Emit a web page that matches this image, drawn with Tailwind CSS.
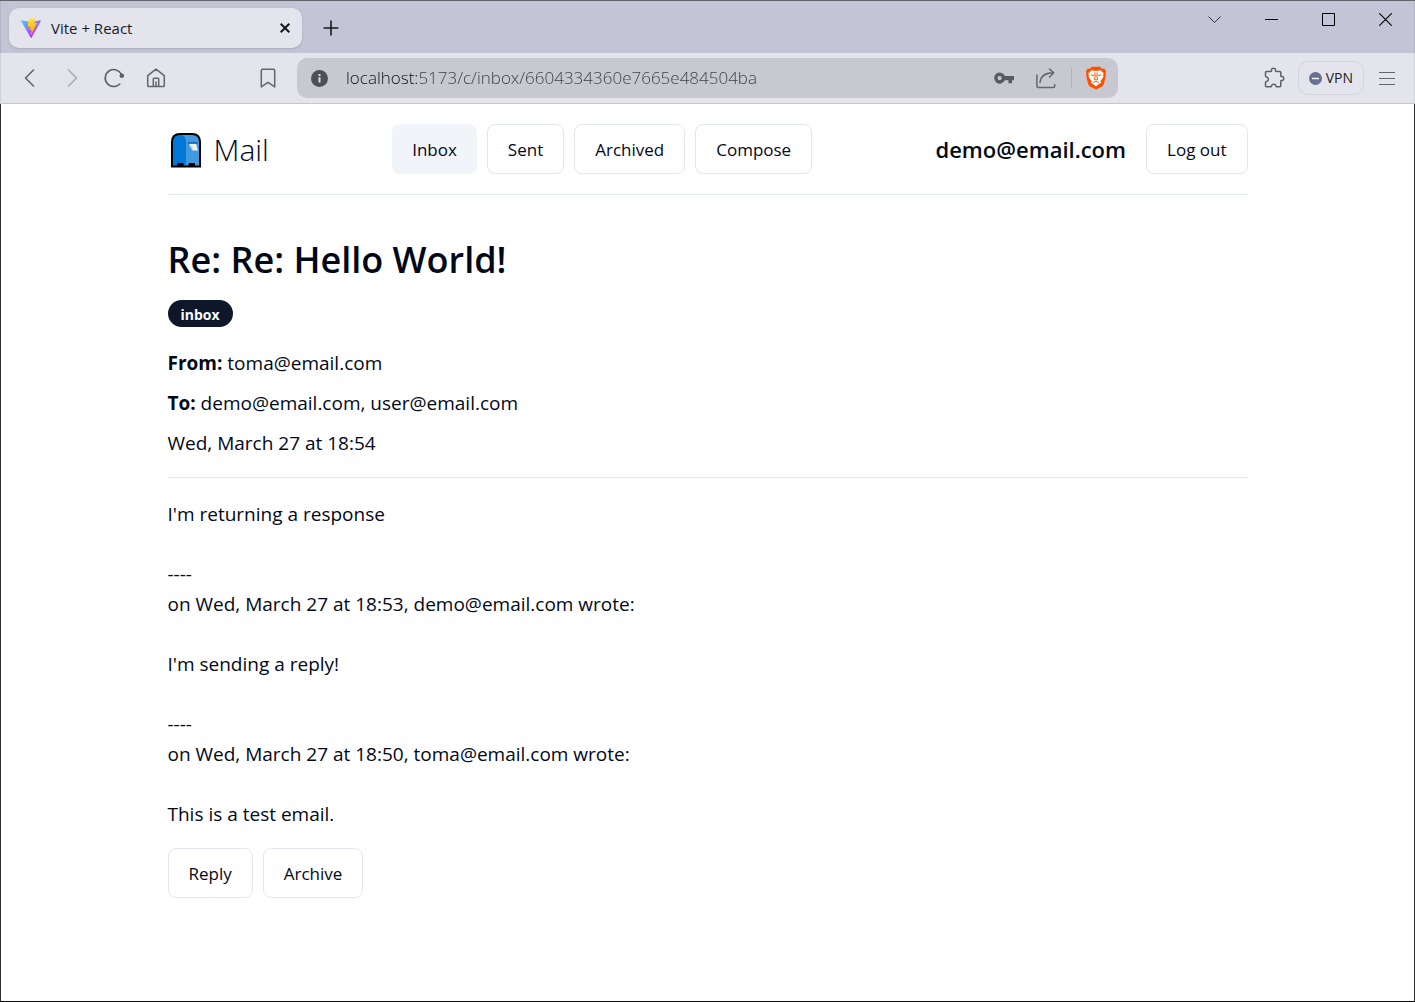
<!DOCTYPE html>
<html lang="en">
<head>
<meta charset="utf-8">
<meta name="viewport" content="width=device-width, initial-scale=1">
<title>Vite + React</title>
<script src="https://cdn.jsdelivr.net/npm/@tailwindcss/browser@4"></script>
</head>
<body class="flex min-h-screen flex-col border-t border-t-[#62626c] bg-white font-['Open_Sans','Noto_Sans',sans-serif] text-[#020817]">

<!-- Tab strip -->
<div class="flex h-[52px] items-start justify-between border-x border-[#b4b4c4] bg-[#c4c4d7]">
  <div class="flex items-center gap-[17px] pt-[7px] pl-2">
    <div class="flex h-10 w-[293px] items-center rounded-[10px] bg-[#e4e4ed] pr-3 pl-3 shadow-sm">
      <svg class="h-5 w-5" viewBox="0 0 256 257" aria-hidden="true">
        <defs>
          <linearGradient id="va" x1="0" y1="0" x2="0.6" y2="0.85"><stop offset="0" stop-color="#41D1FF"/><stop offset="1" stop-color="#BD34FE"/></linearGradient>
          <linearGradient id="vb" x1="0.43" y1="0.02" x2="0.5" y2="0.9"><stop offset="0" stop-color="#FFEA83"/><stop offset="0.08" stop-color="#FFDD35"/><stop offset="1" stop-color="#FFA800"/></linearGradient>
        </defs>
        <path fill="url(#va)" d="M255.153 37.938 134.897 252.976c-2.483 4.44-8.862 4.466-11.382.048L.875 37.958c-2.746-4.814 1.371-10.646 6.827-9.67l120.385 21.517a6.537 6.537 0 0 0 2.322-.004l117.867-21.483c5.438-.991 9.574 4.796 6.877 9.62Z"/>
        <path fill="url(#vb)" d="M185.432.063 96.44 17.501a3.268 3.268 0 0 0-2.634 3.014l-5.474 92.456a3.268 3.268 0 0 0 3.997 3.378l24.777-5.718c2.318-.535 4.413 1.507 3.936 3.838l-7.361 36.047c-.495 2.426 1.782 4.5 4.151 3.78l15.304-4.649c2.372-.72 4.652 1.36 4.15 3.788l-11.698 56.621c-.732 3.542 3.979 5.473 5.943 2.437l1.313-2.028 72.516-144.72c1.215-2.423-.88-5.186-3.54-4.672l-25.505 4.922c-2.396.462-4.435-1.77-3.759-4.114l16.646-57.705c.677-2.35-1.37-4.583-3.769-4.113Z"/>
      </svg>
      <span class="ml-[10px] text-[15px] text-[#1b1b1f]">Vite + React</span>
      <button class="ml-auto" aria-label="Close tab">
        <svg class="h-[10px] w-[10px]" viewBox="0 0 10 10" fill="none" stroke="#17171a" stroke-width="2" aria-hidden="true"><path d="M.7.7l8.6 8.6M9.3.7L.7 9.3"/></svg>
      </button>
    </div>
    <button class="p-1" aria-label="New tab">
      <svg class="h-4 w-4" viewBox="0 0 16 16" fill="none" stroke="#17171a" stroke-width="1.6" aria-hidden="true"><path d="M8 .6v14.8M.6 8h14.8"/></svg>
    </button>
  </div>
  <div class="flex items-center gap-11 pt-3 pr-[22px]">
    <button aria-label="Search tabs"><svg class="h-[13px] w-[13px]" viewBox="0 0 13 13" fill="none" stroke="#2e2e38" stroke-width="1" aria-hidden="true"><path d="M.5 3.5l6 6 6-6"/></svg></button>
    <button aria-label="Minimize"><svg class="h-[13px] w-[13px]" viewBox="0 0 13 13" stroke="#000" aria-hidden="true"><path d="M0 6.5h13"/></svg></button>
    <button aria-label="Maximize"><svg class="h-[13px] w-[13px]" viewBox="0 0 13 13" fill="none" stroke="#000" aria-hidden="true"><path d="M.5.5h12v12H.5z"/></svg></button>
    <button aria-label="Close window"><svg class="h-[13px] w-[13px]" viewBox="0 0 13 13" fill="none" stroke="#000" stroke-width="1.1" aria-hidden="true"><path d="M.3.3l12.4 12.4M12.7.3L.3 12.7"/></svg></button>
  </div>
</div>

<!-- Toolbar -->
<div class="flex h-[51px] items-center justify-between border-x border-b border-x-[#d2d2dc] border-b-[#c6c6d0] bg-[#e4e4ed] pr-[18px] pl-[18px] text-[#65666c]">
  <div class="flex items-center">
    <div class="flex items-center gap-5">
      <button aria-label="Back"><svg class="h-[22px] w-[22px]" viewBox="0 0 22 22" fill="none" stroke="#5f6066" stroke-width="1.5" stroke-linecap="round" stroke-linejoin="round" aria-hidden="true"><path d="M14.5 3L6.5 11l8 8"/></svg></button>
      <button aria-label="Forward" disabled><svg class="h-[22px] w-[22px]" viewBox="0 0 22 22" fill="none" stroke="#a9a9b2" stroke-width="1.5" stroke-linecap="round" stroke-linejoin="round" aria-hidden="true"><path d="M7.5 3l8 8-8 8"/></svg></button>
      <button aria-label="Reload"><svg class="h-[22px] w-[22px]" viewBox="0 0 22 22" fill="none" stroke="#5f6066" stroke-width="1.6" stroke-linecap="round" aria-hidden="true"><path d="M16.8 17A8.500 8.500 0 1 1 18.500 7.500"/><circle cx="18.800" cy="8.800" r="2.300" fill="#5f6066" stroke="none"/></svg></button>
      <button aria-label="Home"><svg class="h-[22px] w-[22px]" viewBox="0 0 22 22" fill="none" stroke="#65666c" stroke-width="1.500" stroke-linejoin="round" aria-hidden="true"><path d="M2.700 8.700L11 2.200l8.300 6.500v10.100q0 .8-.8.800H3.500q-.8 0-.8-.8zM8.300 19.600v-7.600q0-.8.8-.8h3.800q.8 0 .8.800v7.600M11 14.500v5"/></svg></button>
    </div>
    <button class="ml-[90px]" aria-label="Bookmark this page"><svg class="h-[22px] w-[22px]" viewBox="0 0 22 22" fill="none" stroke="#65666c" stroke-width="1.500" stroke-linejoin="round" aria-hidden="true"><path d="M4.300 3.700q0-1.500 1.500-1.500h10.400q1.500 0 1.500 1.500v16.200L11 15.300l-6.700 4.600z"/></svg></button>
  </div>
  <div class="ml-[18px] flex h-10 flex-1 items-center rounded-[10px] bg-[#c8c8d1] pr-[11px] pl-[14px]">
    <svg class="h-[17px] w-[17px] shrink-0" viewBox="0 0 17 17" aria-hidden="true"><circle cx="8.500" cy="8.500" r="8.500" fill="#4f5056"/><path d="M8.500 7.300v5.200M8.500 4v2" stroke="#dcdce4" stroke-width="2"/></svg>
    <input class="ml-[18px] min-w-0 flex-1 bg-[linear-gradient(90deg,#101014_73px,#3c3d44_73px)] bg-clip-text text-[17px] font-light text-transparent outline-none" type="text" aria-label="Address" value="localhost:5173/c/inbox/6604334360e7665e484504ba">
    <div class="flex items-center gap-5">
      <button aria-label="Saved passwords"><svg class="h-[22px] w-[22px]" viewBox="0 0 22 22" aria-hidden="true"><path fill="#5a5b61" fill-rule="evenodd" d="M11.900 8.900H21v4.300h-2v3h-3.600v-3h-3.500A5.600 5.600 0 1 1 11.900 8.900zM6.600 9a2.100 2.100 0 1 0 0 4.200A2.100 2.100 0 0 0 6.600 9z"/></svg></button>
      <button aria-label="Share"><svg class="h-[22px] w-[22px]" viewBox="0 0 22 22" fill="none" stroke="#65666c" stroke-width="1.500" stroke-linecap="round" stroke-linejoin="round" aria-hidden="true"><path d="M1.900 8v11q0 1.500 1.500 1.500h14.800q1.500 0 1.500-1.500v-1.500M5 15.500c.5-5 4-9.500 12.800-9.700M14.500 2l4.300 3.800-4.300 4.200"/></svg></button>
    </div>
    <div class="ml-[14px] h-5 w-px bg-[#b1b1bc]"></div>
    <button class="ml-[13px]" aria-label="Brave Shields"><svg class="h-6 w-[22px]" viewBox="0 0 22 24" aria-hidden="true"><path fill="#ff5000" d="M7 .8h8l2 2 2.200-.3 2 3-.7 2 .5 1.500-2 8.600q-.6 2-2 2.900L11 23.500l-6-3q-1.400-.9-2-2.900L1 9l.5-1.500-.7-2 2-3 2.200.3z"/><path fill="#fff" d="M6.500 4.200l4.500.8 4.500-.8 3.300 3.300-.7 1.500.3 2-2.900 4 .5 1.700-1.700 1-3.300 2.800-3.300-2.800-1.700-1 .5-1.700-2.900-4 .3-2-.7-1.500z"/><path fill="none" stroke="#ff5000" stroke-width="1" d="M6 8.800l3.300 1M16 8.800l-3.300 1M9.800 6.500l.4 4-1.200 2.500 2 1 2-1-1.200-2.500.4-4M8.200 16.500l2.800-1.300 2.800 1.300"/></svg></button>
  </div>
  <div class="ml-[145px] flex items-center">
    <button aria-label="Extensions"><svg class="h-[22px] w-[22px]" viewBox="0 0 22 22" fill="none" stroke="#5f6066" stroke-width="1.500" stroke-linejoin="round" aria-hidden="true"><path d="M3.500 4.400h4.300c.6 0 .8-.5.7-1-.3-1.500.8-2.200 2-2.200s2.300.7 2 2.200c-.1.500.1 1 .7 1h3.600q1 0 1 1v3.400c0 .6.400.8.900.7 1.400-.3 2 .8 2 2s-.6 2.300-2 2c-.5-.1-.9.1-.9.700v4.500q0 1-1 1h-3c-.6 0-.8-.4-.9-.9-.3-1.200-1.200-1.600-2.200-1.600s-1.900.4-2.200 1.600c-.1.500-.3.900-.9.900H3.500q-1 0-1-1v-3.300c0-.6.500-.8 1-.9 1.300-.3 1.900-1.200 1.900-2.300s-.6-2-1.900-2.300c-.5-.1-1-.3-1-.9V5.400q0-1 1-1z"/></svg></button>
    <button class="ml-[13px] flex h-[34px] items-center gap-1 rounded-[10px] border border-[#d4d4de] px-[10px] text-sm text-[#1d1d22]">
      <svg class="h-[13px] w-[13px]" viewBox="0 0 13 13" aria-hidden="true"><circle cx="6.500" cy="6.500" r="6.500" fill="#6a6f96"/><path d="M3 6.500h7" stroke="#fff" stroke-width="1.400"/></svg>
      VPN
    </button>
    <button class="ml-[14px]" aria-label="Menu"><svg class="h-[18px] w-[18px]" viewBox="0 0 18 18" stroke="#65666c" stroke-width="1.200" aria-hidden="true"><path d="M1 3.500h16M1 9.500h16M1 15.500h16"/></svg></button>
  </div>
</div>

<!-- Mail client -->
<div class="flex flex-1 flex-col border-x border-b border-x-[#2c2f2c] border-b-[#0c0f0c] px-5">
  <div class="mx-auto w-full max-w-[1080px]">
    <header class="flex items-center justify-between border-b border-[#e2e8f0] py-5">
      <a href="#" class="flex items-center gap-[10px] pt-0.5">
        <svg class="h-9 w-9" viewBox="0 0 36 36" aria-hidden="true">
          <path fill="#0078d7" d="M4 34V10Q4 2 12 2h13l-2 32z"/>
          <path fill="#419ae0" d="M13 2h11q8 0 8 8v24H18V10q0-5-5-8z"/>
          <path fill="#f2f2f2" d="M21 11.500h7l2 7h-5.500l-2-3.500z"/><path fill="#c8c8c8" d="M22.500 15l2-.5v4z"/><path stroke="#0b5fa5" stroke-width="1.500" d="M20 11h9.500"/>
          <path fill="#000" d="M9 34.500V31h6.500v3.500zM20.500 34.500V31H27v3.500z"/>
          <path fill="none" stroke="#000" stroke-width="2" stroke-linejoin="miter" d="M4 34.500V10Q4 2 12 2h12q8 0 8 8v24.500z"/>
        </svg>
        <span class="text-[30px] leading-[48px] font-light">Mail</span>
      </a>
      <nav class="flex gap-[10px] text-[17px] font-medium">
        <a href="#" class="flex h-[50px] items-center rounded-lg bg-[#f1f5f9] px-5 pt-0.5" aria-current="page">Inbox</a>
        <a href="#" class="flex h-[50px] items-center rounded-lg border border-[#e2e8f0] px-5 pt-0.5">Sent</a>
        <a href="#" class="flex h-[50px] items-center rounded-lg border border-[#e2e8f0] px-5 pt-0.5">Archived</a>
        <a href="#" class="flex h-[50px] items-center rounded-lg border border-[#e2e8f0] px-5 pt-0.5">Compose</a>
      </nav>
      <div class="flex items-center gap-5">
        <span class="text-[22px] font-semibold">demo@email.com</span>
        <button class="h-[50px] rounded-lg border border-[#e2e8f0] px-5 pt-0.5 text-[17px] font-medium">Log out</button>
      </div>
    </header>

    <main class="pt-10 text-[19px] leading-[30px]">
      <h1 class="text-[36px] leading-[50px] font-semibold">Re: Re: Hello World!</h1>
      <div class="mt-[15px] flex"><span class="flex h-[27px] items-center rounded-full bg-[#0f172a] px-[13px] pt-0.5 text-sm font-bold text-[#f8fafc]">inbox</span></div>
      <div class="mt-[21px] flex flex-col gap-[10px] border-b border-[#e2e8f0] pb-[19px]">
        <p><strong>From:</strong> toma@email.com</p>
        <p><strong>To:</strong> demo@email.com, user@email.com</p>
        <p>Wed, March 27 at 18:54</p>
      </div>
      <div class="pt-[21px] whitespace-pre-line">I'm returning a response

----
on Wed, March 27 at 18:53, demo@email.com wrote:

I'm sending a reply!

----
on Wed, March 27 at 18:50, toma@email.com wrote:

This is a test email.</div>
      <div class="mt-[19px] flex gap-[10px] text-[17px] font-medium">
        <button class="h-[50px] rounded-lg border border-[#e2e8f0] px-5 pt-0.5">Reply</button>
        <button class="h-[50px] rounded-lg border border-[#e2e8f0] px-5 pt-0.5">Archive</button>
      </div>
    </main>
  </div>
</div>
</body>
</html>
